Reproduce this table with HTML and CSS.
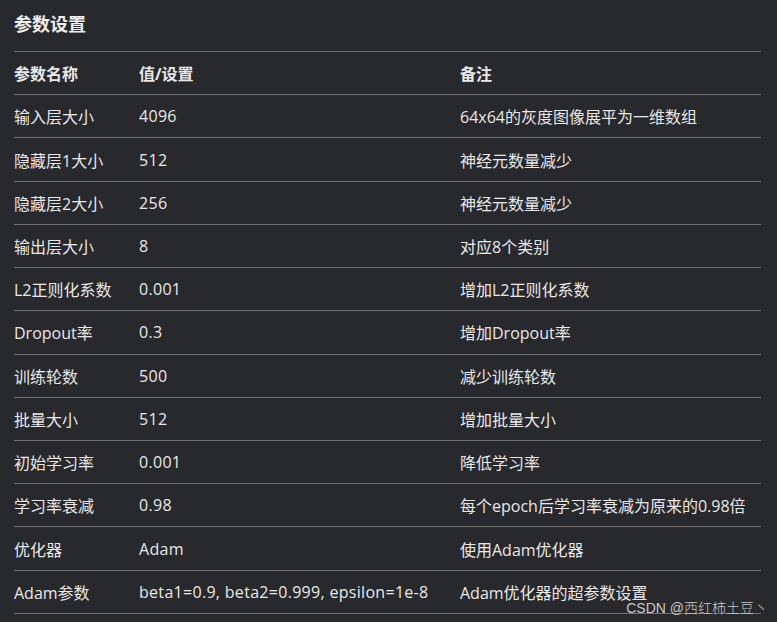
FILE: index.html
```html
<!DOCTYPE html>
<html lang="zh-CN">
<head>
<meta charset="utf-8">
<link rel="stylesheet" href="styles.css">
</head>
<body>
<div class="page">
  <h3 class="title">参数设置</h3>
  <table class="params">
    <thead>
      <tr><th>参数名称</th><th>值/设置</th><th>备注</th></tr>
    </thead>
    <tbody>
      <tr><td>输入层大小</td><td>4096</td><td>64x64的灰度图像展平为一维数组</td></tr>
      <tr><td>隐藏层1大小</td><td>512</td><td>神经元数量减少</td></tr>
      <tr><td>隐藏层2大小</td><td>256</td><td>神经元数量减少</td></tr>
      <tr><td>输出层大小</td><td>8</td><td>对应8个类别</td></tr>
      <tr><td>L2正则化系数</td><td>0.001</td><td>增加L2正则化系数</td></tr>
      <tr><td>Dropout率</td><td>0.3</td><td>增加Dropout率</td></tr>
      <tr><td>训练轮数</td><td>500</td><td>减少训练轮数</td></tr>
      <tr><td>批量大小</td><td>512</td><td>增加批量大小</td></tr>
      <tr><td>初始学习率</td><td>0.001</td><td>降低学习率</td></tr>
      <tr><td>学习率衰减</td><td>0.98</td><td>每个epoch后学习率衰减为原来的0.98倍</td></tr>
      <tr><td>优化器</td><td>Adam</td><td>使用Adam优化器</td></tr>
      <tr><td>Adam参数</td><td>beta1=0.9, beta2=0.999, epsilon=1e-8</td><td>Adam优化器的超参数设置</td></tr>
    </tbody>
  </table>
  <div class="watermark">CSDN @西红柿土豆丶</div>
</div>
</body>
</html>
```
FILE: styles.css
```css
html, body {
  margin: 0;
  padding: 0;
  background: #28292d;
}
.page {
  position: relative;
  width: 747px;
  height: 622px;
  padding: 0 16px 0 14px;
  font-family: "Open Sans", "Noto Sans CJK SC", sans-serif;
  color: #e8e8e8;
}
.title {
  margin: 0;
  height: 51px;
  line-height: 48px;
  font-size: 18px;
  font-weight: 700;
  color: #eeeeee;
}
.params {
  width: 747px;
  border-collapse: collapse;
  font-size: 16px;
  table-layout: fixed;
}
.params th, .params td {
  height: 42.23px;
  padding: 0;
  text-align: left;
  border-top: 1px solid #717171;
  border-bottom: 1px solid #717171;
  white-space: nowrap;
  vertical-align: middle;
}
.params td:nth-child(2) { letter-spacing: 0.3px; }
.params th { font-weight: 700; }
.params th:nth-child(1) { width: 125px; }
.params th:nth-child(2) { width: 321px; }
.watermark {
  position: absolute;
  right: 9px;
  top: 597px;
  font-size: 14px;
  font-family: "Liberation Sans", "Noto Sans CJK SC", sans-serif;
  color: #c8c8c8;
  font-weight: 300;
}
```
